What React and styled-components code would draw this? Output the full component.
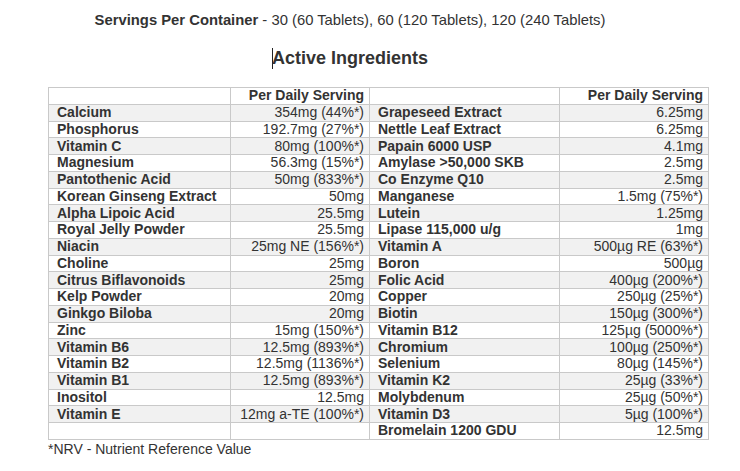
import React from 'react';
import styled, { createGlobalStyle } from 'styled-components';

const GlobalStyle = createGlobalStyle`
  body {
    margin: 0;
    background: #fff;
    font-family: "Liberation Sans", Arial, sans-serif;
    color: #333;
  }
`;

const Page = styled.div`
  width: 740px;
  height: 471px;
  overflow: hidden;
  padding-top: 11px;
  box-sizing: border-box;
`;

const Servings = styled.div`
  width: 700px;
  text-align: center;
  font-size: 14.8px;
  line-height: 18px;

  b {
    font-weight: bold;
  }
`;

const Heading = styled.h2`
  width: 700px;
  margin: 18px 0 0;
  text-align: center;
  font-size: 18px;
  line-height: 22px;
  font-weight: bold;
  color: #333;
`;

const Caret = styled.span`
  display: inline-block;
  width: 1px;
  height: 21px;
  margin-right: -1px;
  vertical-align: -5px;
  background: #222;
`;

const Table = styled.table`
  margin: 18px 0 0 48px;
  width: 660px;
  border-collapse: collapse;
  table-layout: fixed;
  font-size: 14px;
`;

const Row = styled.tr`
  height: 16.76px;
  background: ${(p) => (p.$shade ? '#f1f1f1' : '#fff')};
`;

const Cell = styled.td`
  border: 1px solid #c9c9c9;
  padding: 0 5px 0 ${(p) => (p.$num ? '5px' : '8px')};
  line-height: 15px;
  text-align: ${(p) => (p.$num ? 'right' : 'left')};
  font-weight: ${(p) => (p.$bold ? 'bold' : 'normal')};
  white-space: nowrap;
  overflow: hidden;
  color: #333;
`;

const Footnote = styled.div`
  margin: 1px 0 0 48px;
  font-size: 14px;
  line-height: 16px;
`;

const left = [
  ['Calcium', '354mg (44%*)'],
  ['Phosphorus', '192.7mg (27%*)'],
  ['Vitamin C', '80mg (100%*)'],
  ['Magnesium', '56.3mg (15%*)'],
  ['Pantothenic Acid', '50mg (833%*)'],
  ['Korean Ginseng Extract', '50mg'],
  ['Alpha Lipoic Acid', '25.5mg'],
  ['Royal Jelly Powder', '25.5mg'],
  ['Niacin', '25mg NE (156%*)'],
  ['Choline', '25mg'],
  ['Citrus Biflavonoids', '25mg'],
  ['Kelp Powder', '20mg'],
  ['Ginkgo Biloba', '20mg'],
  ['Zinc', '15mg (150%*)'],
  ['Vitamin B6', '12.5mg (893%*)'],
  ['Vitamin B2', '12.5mg (1136%*)'],
  ['Vitamin B1', '12.5mg (893%*)'],
  ['Inositol', '12.5mg'],
  ['Vitamin E', '12mg a-TE (100%*)'],
  ['', ''],
];

const right = [
  ['Grapeseed Extract', '6.25mg'],
  ['Nettle Leaf Extract', '6.25mg'],
  ['Papain 6000 USP', '4.1mg'],
  ['Amylase >50,000 SKB', '2.5mg'],
  ['Co Enzyme Q10', '2.5mg'],
  ['Manganese', '1.5mg (75%*)'],
  ['Lutein', '1.25mg'],
  ['Lipase 115,000 u/g', '1mg'],
  ['Vitamin A', '500µg RE (63%*)'],
  ['Boron', '500µg'],
  ['Folic Acid', '400µg (200%*)'],
  ['Copper', '250µg (25%*)'],
  ['Biotin', '150µg (300%*)'],
  ['Vitamin B12', '125µg (5000%*)'],
  ['Chromium', '100µg (250%*)'],
  ['Selenium', '80µg (145%*)'],
  ['Vitamin K2', '25µg (33%*)'],
  ['Molybdenum', '25µg (50%*)'],
  ['Vitamin D3', '5µg (100%*)'],
  ['Bromelain 1200 GDU', '12.5mg'],
];

export default function App() {
  return (
    <Page>
      <GlobalStyle />
      <Servings>
        <b>Servings Per Container</b> - 30 (60 Tablets), 60 (120 Tablets), 120 (240 Tablets)
      </Servings>
      <Heading>
        <Caret />
        Active Ingredients
      </Heading>
      <Table>
        <colgroup>
          <col style={{ width: 182 }} />
          <col style={{ width: 139 }} />
          <col style={{ width: 190 }} />
          <col style={{ width: 149 }} />
        </colgroup>
        <tbody>
          <Row>
            <Cell />
            <Cell $num $bold>Per Daily Serving</Cell>
            <Cell />
            <Cell $num $bold>Per Daily Serving</Cell>
          </Row>
          {left.map((l, i) => (
            <Row key={i} $shade={i % 2 === 0}>
              <Cell $bold>{l[0]}</Cell>
              <Cell $num>{l[1]}</Cell>
              <Cell $bold>{right[i][0]}</Cell>
              <Cell $num>{right[i][1]}</Cell>
            </Row>
          ))}
        </tbody>
      </Table>
      <Footnote>*NRV - Nutrient Reference Value</Footnote>
    </Page>
  );
}
